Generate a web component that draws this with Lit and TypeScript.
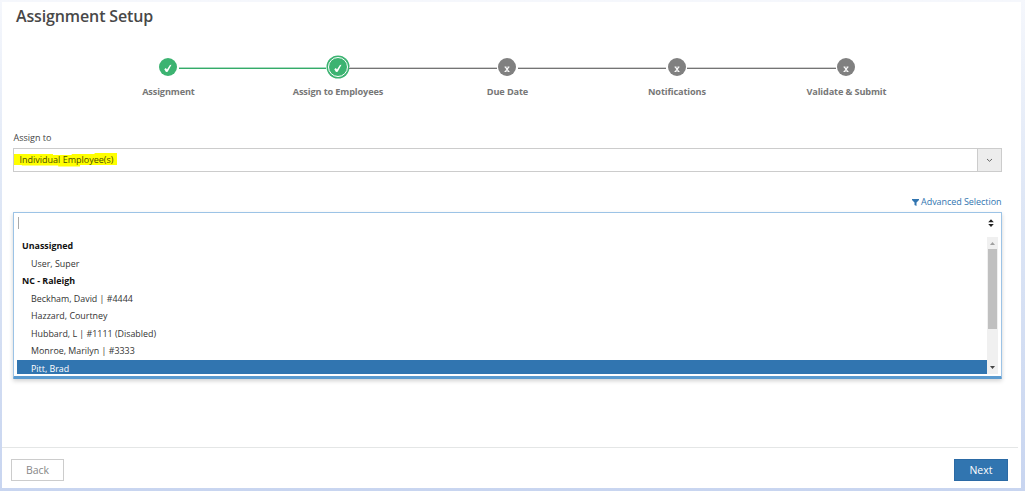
import { LitElement, html, css, svg } from "lit";
import { customElement } from "lit/decorators.js";
import { classMap } from "lit/directives/class-map.js";

interface Step { label: string; done: boolean; active?: boolean; left?: string; right?: string; }
interface Option { text: string; group?: boolean; selected?: boolean; }

const STEPS: Step[] = [
  { label: "Assignment", done: true, right: "green" },
  { label: "Assign to Employees", done: true, active: true, left: "green", right: "gray" },
  { label: "Due Date", done: false, left: "gray", right: "gray" },
  { label: "Notifications", done: false, left: "gray", right: "gray" },
  { label: "Validate & Submit", done: false, left: "gray" },
];

const OPTIONS: Option[] = [
  { text: "Unassigned", group: true },
  { text: "User, Super" },
  { text: "NC - Raleigh", group: true },
  { text: "Beckham, David | #4444" },
  { text: "Hazzard, Courtney" },
  { text: "Hubbard, L | #1111 (Disabled)" },
  { text: "Monroe, Marilyn | #3333" },
  { text: "Pitt, Brad", selected: true },
];

@customElement("step-track")
class StepTrack extends LitElement {
  static styles = css`
    :host { display: flex; padding-left: 81.7px; height: 50px; }
    .step { width: 169.5px; flex: none; display: flex; flex-direction: column; align-items: center; }
    .rail { width: 100%; height: 24px; display: flex; align-items: center; }
    .line { flex: 1; height: 1px; margin-top: 3px; }
    .green { background: #34ab69; box-shadow: 0 -1px #a9dcc0; }
    .gray { background: #747474; box-shadow: 0 -1px #d0d0d0; }
    .dot { width: 18px; height: 18px; border-radius: 50%; background: #808080; flex: none; margin: 0 1.5px; }
    .done { background: #3cb371; }
    .active { border: 1.5px solid #fff; box-shadow: 0 0 0 1.5px #3cb371; }
    .dot svg { display: block; }
    .label { font: 700 9.2px/14px "Open Sans", sans-serif; letter-spacing: -0.14px; color: #777; margin-top: 6px; white-space: nowrap; }
  `;
  render() {
    return STEPS.map((s) => html`
      <div class="step">
        <div class="rail">
          <div class="line ${s.left ?? ""}"></div>
          <div class=${classMap({ dot: true, done: s.done, active: !!s.active })}>
            <svg width="18" height="18" viewBox="0 0 18 18">
              ${s.done
                ? svg`<path d="M5.3 11.2L6.8 10.1L8 11.4L10.9 6.9L12.5 6.8L8.7 13.8L7 13.9Z" fill="#fff"/>`
                : svg`<path d="M6.5 9h2M9.5 9h2M6.5 13.5h2M9.5 13.5h2" stroke="#fff" stroke-width=".9"/><path d="M7.4 9.1L10.7 13.5M10.7 9.1L7.4 13.5" stroke="#fff" stroke-width="1.2"/>`}
            </svg>
          </div>
          <div class="line ${s.right ?? ""}"></div>
        </div>
        <div class="label">${s.label}</div>
      </div>`);
  }
}

@customElement("employee-list")
class EmployeeList extends LitElement {
  static styles = css`
    :host { display: block; box-sizing: border-box; height: 167px; border: 1px solid #9cc3e6; border-bottom: 3px solid #5b9bd0; border-radius: 1px; box-shadow: 0 2px 4px rgba(0,0,0,.18); background: #fff; padding: 0 3px; font: 8.9px/17.6px "Open Sans", sans-serif; color: #333; }
    .search { height: 24px; box-sizing: border-box; display: flex; align-items: center; justify-content: space-between; padding: 0 3px 4px 0; }
    .caret { width: 1px; height: 12px; background: #aaa; margin-left: 1px; }
    .body { display: flex; height: 137px; }
    .items { flex: 1; overflow: hidden; }
    .row { height: 17.5px; padding-left: 14px; white-space: nowrap; }
    .group { padding-left: 5px; font-weight: 700; color: #111; }
    .selected { background: #3175b0; color: #fff; }
    .bar { width: 11px; background: #f0f0f0; display: flex; flex-direction: column; align-items: center; }
    .thumb { width: 9px; height: 80px; background: #c0c0c0; }
    .grow { flex: 1; }
    svg { display: block; }
  `;
  render() {
    return html`
      <div class="search">
        <div class="caret"></div>
        <svg width="8" height="10" viewBox="0 0 8 10"><path d="M1.2 4.3L4 1.3l2.8 3zM1.2 6L4 9l2.8-3z" fill="#222"/></svg>
      </div>
      <div class="body">
        <div class="items">
          ${OPTIONS.map((o) => html`<div class=${classMap({ row: true, group: !!o.group, selected: !!o.selected })}>${o.text}</div>`)}
        </div>
        <div class="bar">
          <svg width="11" height="12"><path d="M3 8L5.5 5L8 8z" fill="#a0a0a0"/></svg>
          <div class="thumb"></div><div class="grow"></div>
          <svg width="11" height="13"><path d="M3 5L5.5 8L8 5z" fill="#444"/></svg>
        </div>
      </div>`;
  }
}

@customElement("app-root")
class AppRoot extends LitElement {
  static styles = css`
    :host { display: block; width: 1025px; height: 491px; box-sizing: border-box; padding: 2px 4px 3px 2px; background: linear-gradient(#f5f7fc, #dce5f5 45%, #c8d5f0); font-family: "Open Sans", sans-serif; overflow: hidden; }
    .page { height: 486px; background: #fff; display: flex; flex-direction: column; }
    h1 { margin: 0; padding: 3px 0 0 14px; font-size: 16px; line-height: 22px; height: 28px; font-weight: 600; letter-spacing: -0.13px; color: #484848; }
    step-track { margin-top: 22px; }
    .content { margin: 26px 19.5px 0 11px; display: flex; flex-direction: column; font-size: 9px; color: #444; }
    .label { line-height: 14px; height: 17px; padding-left: 0.5px; }
    .select { height: 24px; box-sizing: border-box; border: 1px solid #ccc; display: flex; align-items: center; }
    .value { flex: 1; display: flex; }
    .mark { height: 14px; line-height: 14px; background: #ff0; padding: 0 4px 0 6px; margin-left: -0.5px; color: #4a4a00; clip-path: polygon(0 1px, 38% 1px, 38% 2px, 56% 2px, 56% 1px, 78% 1px, 78% 0, 100% 0, 100% 12px, 64% 12px, 64% 13.5px, 43% 13.5px, 43% 12.5px, 8% 12.5px, 8% 12px, 0 12px); }
    .arrow { width: 23px; height: 100%; background: #ededed; border-left: 1px solid #ccc; display: flex; align-items: center; justify-content: center; }
    .advanced { margin-top: 23px; height: 17px; line-height: 14px; letter-spacing: -0.06px; color: #3175b0; display: flex; justify-content: flex-end; gap: 2.5px; }
    .advanced svg { margin-top: 4px; }
    .footer { margin-top: auto; margin-right: 3px; height: 41px; box-sizing: border-box; border-top: 1px solid #e4e6e6; padding: 11px 10px 0 9px; display: flex; justify-content: space-between; }
    .button { box-sizing: border-box; height: 22px; width: 53px; text-align: center; border: 1px solid #ccc; font-size: 10.5px; line-height: 20px; color: #888; }
    .next { width: 54px; background: #3175b0; border-color: #2b6aa5; color: #fff; }
  `;
  render() {
    return html`
      <div class="page">
        <h1>Assignment Setup</h1>
        <step-track></step-track>
        <div class="content">
          <div class="label">Assign to</div>
          <div class="select">
            <div class="value"><span class="mark">Individual Employee(s)</span></div>
            <div class="arrow"><svg width="7" height="5"><path d="M1 1l2.5 2.3L6 1" fill="none" stroke="#666"/></svg></div>
          </div>
          <div class="advanced"><svg width="7" height="7"><path d="M0 0h7v1L4.5 3.5V7L2.5 6V3.5L0 1z" fill="#3175b0"/></svg><span>Advanced Selection</span></div>
          <employee-list></employee-list>
        </div>
        <div class="footer"><div class="button">Back</div><div class="button next">Next</div></div>
      </div>`;
  }
}
